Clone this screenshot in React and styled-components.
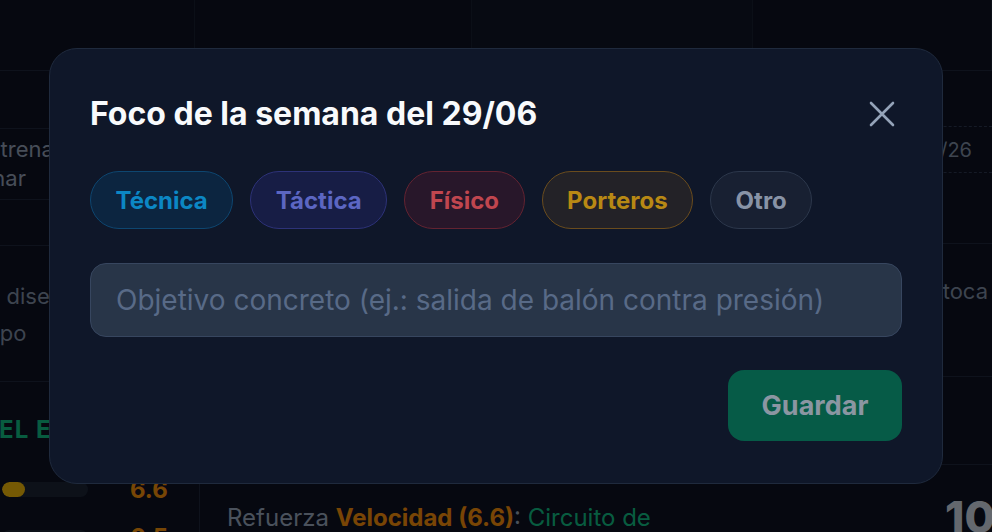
import React from "react";
import styled, { createGlobalStyle } from "styled-components";

const Global = createGlobalStyle`
  html, body { margin: 0; padding: 0; background: #0c1020; }
  body { font-family: Inter, "Noto Sans", sans-serif; overflow: hidden; }
  * { box-sizing: border-box; }
`;

const Page = styled.div`
  position: relative;
  width: 100vw;
  height: 100vh;
  overflow: hidden;
  background: #0c1020;
`;

const Dashboard = styled.div`
  display: flex;
  flex-direction: column;
  height: 100%;
  overflow: hidden;
`;

const TopBar = styled.div`
  display: grid;
  grid-template-columns: 195px 277px 281px 1fr;
  height: 71px;
  flex: none;
  border-bottom: 1px solid #1c2538;
`;

const TopCell = styled.div`
  border-right: 1px solid #161e2e;
  background: ${(p) => p.$tint || "transparent"};
`;

const Body = styled.div`
  flex: 1;
  display: grid;
  grid-template-columns: 360px 1fr 190px;
  align-items: start;
  margin-left: -160px;
  min-height: 0;
`;

const LeftCol = styled.div`
  display: flex;
  flex-direction: column;
  border-right: 1px solid #1c2538;
  padding: 57px 32px 0 0;
  min-height: 600px;
`;

const NoteBox = styled.div`
  height: 72px;
  border-top: 1px solid #1c2538;
  border-bottom: 1px solid #1c2538;
  padding-top: 6px;
  font-size: 22px;
  line-height: 29px;
  color: #8e9bb0;
`;

const Line = styled.div`
  padding-left: ${(p) => p.$indent}px;
  white-space: nowrap;
`;

const Section = styled.div`
  margin-top: 45px;
  height: 137px;
  border-top: 1px solid #1c2538;
  border-bottom: 1px solid #1c2538;
  padding-top: 32px;
  font-size: 22px;
  line-height: 37px;
  color: #7a889e;
`;

const GreenHeading = styled.div`
  margin-top: 33px;
  padding-left: 58px;
  font-size: 24px;
  line-height: 30px;
  font-weight: 700;
  letter-spacing: 1px;
  color: #10b981;
  white-space: nowrap;
`;

const StatRow = styled.div`
  display: flex;
  align-items: center;
  gap: 42px;
  height: 48px;
  padding-left: 40px;
  margin-top: ${(p) => p.$top || 0}px;
`;

const StatLabel = styled.span`
  width: 80px;
  font-size: 20px;
  color: #8e9bb0;
  white-space: nowrap;
`;

const Track = styled.div`
  flex: 1;
  height: 15px;
  border-radius: 8px;
  background: #1a2233;
  overflow: hidden;
`;

const Fill = styled.div`
  height: 100%;
  border-radius: 8px;
  background: #eab308;
`;

const StatValue = styled.span`
  font-size: 24px;
  font-weight: 700;
  color: #ef8c0a;
  width: 37px;
  text-align: right;
`;

const CenterCol = styled.div`
  display: flex;
  flex-direction: column;
  padding: 430px 0 0 27px;
`;

const AdviceText = styled.p`
  margin: 0;
  font-size: 24px;
  line-height: 34px;
  color: #94a3b8;
  white-space: nowrap;
`;

const Strong = styled.strong`
  color: ${(p) => p.$color};
  font-weight: 700;
`;

const Colored = styled.span`
  color: ${(p) => p.$color};
`;

const RightCol = styled.div`
  display: flex;
  flex-direction: column;
  padding-top: 55px;
  margin-left: -40px;
`;

const DateBox = styled.div`
  height: 47px;
  border-top: 1px dashed #2a354c;
  border-bottom: 1px dashed #2a354c;
  display: flex;
  align-items: center;
  justify-content: flex-end;
  padding-right: 20px;
  font-size: 20px;
  color: #7a889e;
  white-space: nowrap;
`;

const RightSection = styled.div`
  margin-top: 70px;
  height: 134px;
  border-top: 1px solid #1c2538;
  border-bottom: 1px solid #1c2538;
  display: flex;
  justify-content: flex-end;
  padding: 34px 4px 0 0;
  font-size: 22px;
  color: #7a889e;
  white-space: nowrap;
`;

const RightLine = styled.div`
  margin-top: 87px;
  border-top: 1px solid #1c2538;
`;

const BigNumber = styled.div`
  margin-top: 25px;
  padding-left: 183px;
  font-size: 44px;
  font-weight: 800;
  color: #c8d0dc;
  white-space: nowrap;
`;

const Overlay = styled.div`
  position: absolute;
  inset: 0;
  background: rgba(0, 0, 0, 0.5);
  display: flex;
  align-items: center;
  justify-content: center;
`;

const Modal = styled.div`
  width: 894px;
  background: #0f1729;
  border: 1px solid #1f2a3d;
  border-radius: 28px;
  padding: 40px 40px 42px;
  display: flex;
  flex-direction: column;
`;

const Header = styled.div`
  display: flex;
  align-items: center;
  justify-content: space-between;
  height: 50px;
`;

const Title = styled.h2`
  margin: 0;
  font-size: 32px;
  line-height: 38px;
  font-weight: 700;
  color: #f8fafc;
`;

const CloseButton = styled.button`
  width: 40px;
  height: 40px;
  border: none;
  background: transparent;
  display: flex;
  align-items: center;
  justify-content: center;
  padding: 0;
  cursor: pointer;
`;

const Chips = styled.div`
  display: flex;
  gap: 17px;
  margin-top: 32px;
`;

const Chip = styled.button`
  height: 58px;
  padding: 0 24.5px;
  border-radius: 29px;
  border: 1.5px solid ${(p) => p.$border};
  background: ${(p) => p.$bg};
  color: ${(p) => p.$color};
  font-family: Inter, "Noto Sans", sans-serif;
  font-size: 24px;
  font-weight: 700;
  cursor: pointer;
`;

const Input = styled.input`
  margin-top: 34px;
  height: 74px;
  width: 100%;
  border-radius: 16px;
  border: 1.5px solid #37465f;
  background: #283548;
  padding: 0 25px;
  font-family: Inter, "Noto Sans", sans-serif;
  font-size: 28px;
  color: #e2e8f0;
  outline: none;
  &::placeholder {
    color: #586a87;
  }
`;

const Footer = styled.div`
  display: flex;
  justify-content: flex-end;
  margin-top: 33px;
`;

const SaveButton = styled.button`
  width: 174px;
  height: 71px;
  border: none;
  border-radius: 16px;
  background: #065b47;
  color: #8b96a2;
  font-family: Inter, "Noto Sans", sans-serif;
  font-size: 27px;
  font-weight: 700;
  cursor: pointer;
`;

const chips = [
  { label: "Técnica", color: "#0c87c4", bg: "#0c2540", border: "#0d4670" },
  { label: "Táctica", color: "#5c66c2", bg: "#171d45", border: "#2d3278" },
  { label: "Físico", color: "#c0464f", bg: "#28172a", border: "#632331" },
  { label: "Porteros", color: "#b88914", bg: "#232227", border: "#6a4c1d" },
  { label: "Otro", color: "#8893a6", bg: "#182032", border: "#2c374b" },
];

export default function App() {
  return (
    <Page>
      <Global />
      <Dashboard>
        <TopBar>
          <TopCell />
          <TopCell />
          <TopCell $tint="#0e1424" />
          <TopCell />
        </TopBar>
        <Body>
          <LeftCol>
            <NoteBox>
              <Line $indent={26}>Sesión de entrenamiento</Line>
              <Line $indent={6}>Día para entrenar</Line>
            </NoteBox>
            <Section>
              <Line $indent={72}>Ejercicio diseñado</Line>
              <Line $indent={38}>para el equipo</Line>
            </Section>
            <GreenHeading>NIVEL DEL EQUIPO</GreenHeading>
            <StatRow $top={20}>
              <StatLabel>Velocidad</StatLabel>
              <Track>
                <Fill style={{ width: "27%" }} />
              </Track>
              <StatValue>6.6</StatValue>
            </StatRow>
            <StatRow>
              <StatLabel>Técnica</StatLabel>
              <Track />
              <StatValue>6.5</StatValue>
            </StatRow>
          </LeftCol>
          <CenterCol>
            <AdviceText>
              Refuerza <Strong $color="#f08a0a">Velocidad (6.6)</Strong>:{" "}
              <Colored $color="#10b981">Circuito de</Colored>
            </AdviceText>
          </CenterCol>
          <RightCol>
            <DateBox>29/06/26</DateBox>
            <RightSection>Esta semana toca</RightSection>
            <RightLine />
            <BigNumber>10</BigNumber>
          </RightCol>
        </Body>
      </Dashboard>
      <Overlay>
        <Modal>
          <Header>
            <Title>Foco de la semana del 29/06</Title>
            <CloseButton aria-label="Cerrar">
              <svg width="26" height="26" viewBox="0 0 26 26" fill="none">
                <path
                  d="M2 2L24 24M24 2L2 24"
                  stroke="#94a3b8"
                  strokeWidth="2.6"
                  strokeLinecap="round"
                />
              </svg>
            </CloseButton>
          </Header>
          <Chips>
            {chips.map((c) => (
              <Chip key={c.label} $color={c.color} $bg={c.bg} $border={c.border}>
                {c.label}
              </Chip>
            ))}
          </Chips>
          <Input placeholder="Objetivo concreto (ej.: salida de balón contra presión)" />
          <Footer>
            <SaveButton>Guardar</SaveButton>
          </Footer>
        </Modal>
      </Overlay>
    </Page>
  );
}
